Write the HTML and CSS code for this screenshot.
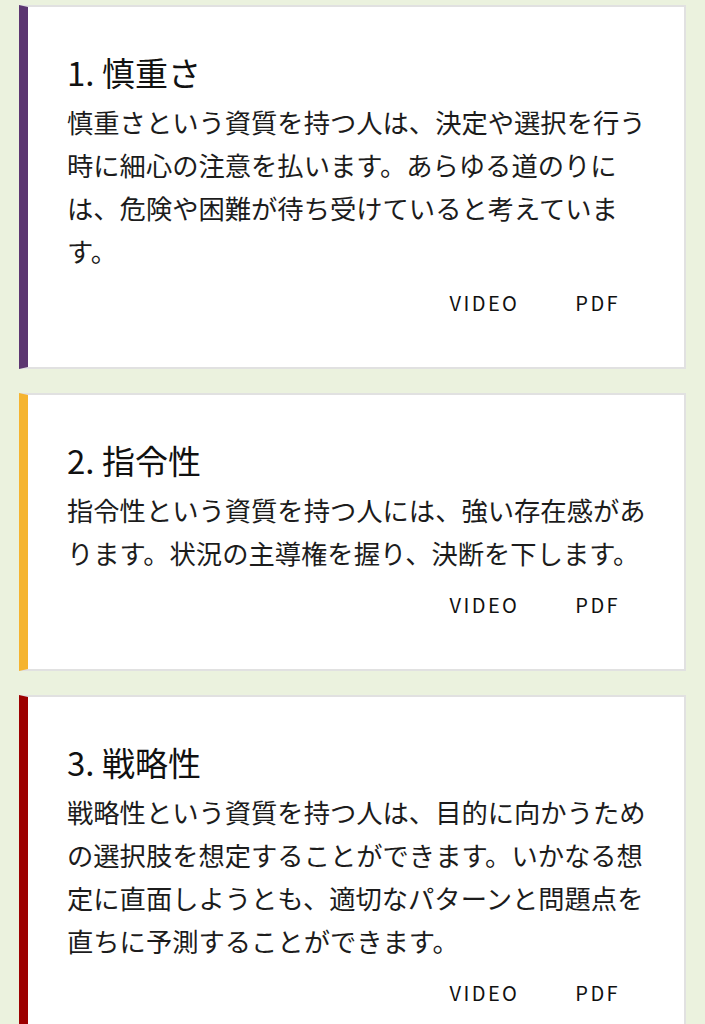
FILE: index.html
```html
<!DOCTYPE html>
<html lang="ja">
<head>
<meta charset="utf-8">
<title>資質</title>
<link rel="stylesheet" href="styles.css">
</head>
<body>
<main class="list">
  <section class="card card--purple">
    <h2 class="card-title">1. 慎重さ</h2>
    <p class="card-text">慎重さという資質を持つ人は、決定や選択を行う時に細心の注意を払います。あらゆる道のりには、危険や困難が待ち受けていると考えています。</p>
    <div class="card-actions">
      <a class="card-btn">VIDEO</a>
      <a class="card-btn">PDF</a>
    </div>
  </section>
  <section class="card card--yellow">
    <h2 class="card-title">2. 指令性</h2>
    <p class="card-text">指令性という資質を持つ人には、強い存在感があります。状況の主導権を握り、決断を下します。</p>
    <div class="card-actions">
      <a class="card-btn">VIDEO</a>
      <a class="card-btn">PDF</a>
    </div>
  </section>
  <section class="card card--red">
    <h2 class="card-title">3. 戦略性</h2>
    <p class="card-text">戦略性という資質を持つ人は、目的に向かうための選択肢を想定することができます。いかなる想定に直面しようとも、適切なパターンと問題点を直ちに予測することができます。</p>
    <div class="card-actions">
      <a class="card-btn">VIDEO</a>
      <a class="card-btn">PDF</a>
    </div>
  </section>
</main>
</body>
</html>
```
FILE: styles.css
```css
html, body {
  margin: 0;
  padding: 0;
  background: #ebf2de;
}
body {
  font-family: "Noto Sans CJK JP", "Noto Sans", sans-serif;
  color: #1c1c1c;
}
.list {
  display: flex;
  flex-direction: column;
  gap: 24px;
  padding: 5px 19px 40px 19px;
}
.card {
  background: #fff;
  border: 2px solid #e1e1e1;
  border-left: 9px solid #5c3671;
  padding: 37px 22px 45px 39px;
}
.card--purple { border-left-color: #5c3671; }
.card--yellow { border-left-color: #f5b430; }
.card--red { border-left-color: #9c0000; }
.card-title {
  margin: 0;
  font-size: 33px;
  line-height: 56px;
  font-weight: 400;
  color: #111;
}
.card-text {
  margin: 0;
  font-size: 26.3px;
  line-height: 43px;
  color: #1c1c1c;
}
.card-actions {
  margin-top: 10px;
  height: 40px;
  display: flex;
  justify-content: flex-end;
  align-items: center;
  gap: 24px;
  padding-right: 26px;
}
.card-btn {
  font-size: 20px;
  letter-spacing: 2.4px;
  padding: 0 16px;
  color: #111;
}
```
